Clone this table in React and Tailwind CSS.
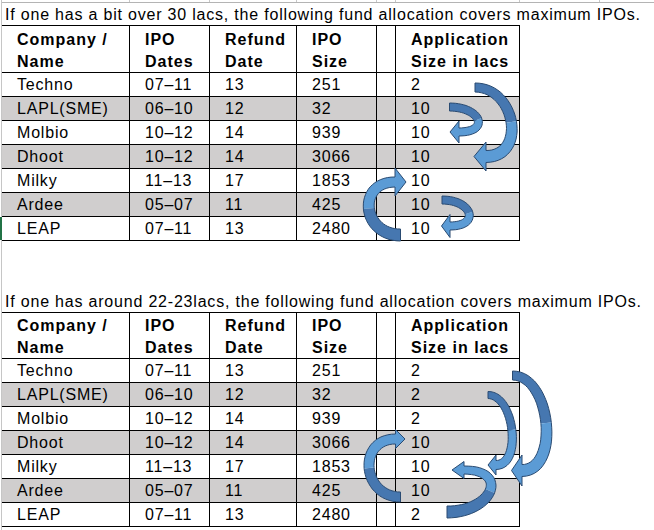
const COLS = "grid grid-cols-[127px_80px_87px_80px_19px_125px]";

const names = ["Techno", "LAPL(SME)", "Molbio", "Dhoot", "Milky", "Ardee", "LEAP"];
const dates = ["07–11", "06–10", "10–12", "10–12", "11–13", "05–07", "07–11"];
const refund = ["13", "12", "14", "14", "17", "11", "13"];
const size = ["251", "32", "939", "3066", "1853", "425", "2480"];

const app1 = ["2", "10", "10", "10", "10", "10", "10"];
const app2 = ["2", "2", "2", "10", "10", "10", "2"];

const header = [
  ["Company /", "Name"],
  ["IPO", "Dates"],
  ["Refund", "Date"],
  ["IPO", "Size"],
  ["", ""],
  ["Application", "Size in lacs"],
];

// curved block arrows: tail -> head along a cubic centerline
const ARROWS = [
  { p0: [475, 87.5], p3: [486, 156.5], s: 1, d: 41, w0: 9, w1: 12, hh: 14.5, hl: 12 },
  { p0: [449.5, 107], p3: [459, 132], s: 1, d: 31.5, w0: 8, w1: 8, hh: 11, hl: 9 },
  { p0: [400.5, 235], p3: [395, 182], s: -1, d: 38.5, w0: 12, w1: 10, hh: 14, hl: 11 },
  { p0: [442, 200], p3: [450, 226], s: 1, d: 30.5, w0: 8, w1: 8, hh: 11.5, hl: 8.5 },
  { p0: [512.5, 375.5], p3: [522, 470.5], s: 1, d: 38.5, w0: 9, w1: 12, hh: 15.5, hl: 10.5 },
  { p0: [488, 395], p3: [496, 465], s: 1, d: 26.5, w0: 7, w1: 9, hh: 10, hl: 8 },
  { p0: [400.5, 497], p3: [395.5, 439], s: -1, d: 38.5, w0: 10, w1: 10, hh: 9.5, hl: 9.5 },
  { p0: [447, 512], p3: [464, 470], s: 1, d: 46, w0: 12, w1: 8, hh: 8.5, hl: 12 },
];

function arrowShapes(a) {
  const [x0, y0] = a.p0;
  const [x3, y3] = a.p3;
  const P = [
    [x0, y0],
    [x0 + a.s * a.d, y0],
    [x3 + a.s * a.d, y3],
    [x3, y3],
  ];
  const pt = (t) => {
    const u = 1 - t;
    const b = [u * u * u, 3 * u * u * t, 3 * u * t * t, t * t * t];
    return [0, 1].map((k) => b.reduce((acc, c, i) => acc + c * P[i][k], 0));
  };
  const tan = (t) => {
    const u = 1 - t;
    const b = [-3 * u * u, 3 * u * u - 6 * u * t, 6 * u * t - 3 * t * t, 3 * t * t];
    const v = [0, 1].map((k) => b.reduce((acc, c, i) => acc + c * P[i][k], 0));
    const len = Math.hypot(v[0], v[1]) || 1;
    return [v[0] / len, v[1] / len];
  };
  const N = 32;
  const left = [];
  const right = [];
  for (let i = 0; i <= N; i++) {
    const t = i / N;
    const [px, py] = pt(t);
    const [tx, ty] = tan(t);
    const w = (a.w0 + (a.w1 - a.w0) * t) / 2;
    left.push([px - ty * w, py + tx * w]);
    right.push([px + ty * w, py - tx * w]);
  }
  const [ex, ey] = pt(1);
  const [tx, ty] = tan(1);
  const head = [
    [ex - ty * a.hh, ey + tx * a.hh],
    [ex + tx * a.hl, ey + ty * a.hl],
    [ex + ty * a.hh, ey - tx * a.hh],
  ];
  const h = N / 2;
  const str = (pts) => "M" + pts.map((p) => p[0].toFixed(1) + " " + p[1].toFixed(1)).join(" L") + " Z";
  return {
    dark: str([...left.slice(0, h + 1), ...right.slice(0, h + 1).reverse()]),
    light: str([...left.slice(h), ...head, ...right.slice(h).reverse()]),
    outline: str([...left, ...head, ...right.slice().reverse()]),
  };
}

function Arrows() {
  return (
    <svg className="absolute left-0 top-0 pointer-events-none" width="654" height="530" viewBox="0 0 654 530">
      {ARROWS.map((a, i) => {
        const s = arrowShapes(a);
        return (
          <g key={i}>
            <path d={s.dark} fill="#4677b0" />
            <path d={s.light} fill="#5b9bd5" />
            <path d={s.outline} fill="none" stroke="#2a4b72" strokeWidth="1" strokeLinejoin="round" />
          </g>
        );
      })}
    </svg>
  );
}

function Cell({ i, gray, children }) {
  return (
    <div
      className={
        "h-[24px] border-t border-black flex items-end pl-[15px] pb-[2px] leading-[18px] whitespace-nowrap " +
        (i > 0 ? "border-l " : "") +
        (i === 5 ? "border-r " : "") +
        (gray ? "bg-[#d0cece]" : "bg-white")
      }
    >
      {children}
    </div>
  );
}

function Table({ apps, headH }) {
  return (
    <div className={COLS + " border-b border-black w-max"}>
      {header.map((h, i) => (
        <div
          key={i}
          className={
            headH +
            " border-t border-black flex flex-col justify-end pl-[15px] pb-[1px] font-bold tracking-[1px] whitespace-nowrap " +
            (i > 0 ? "border-l " : "") +
            (i === 5 ? "border-r" : "")
          }
        >
          <span className="leading-[18px]">{h[0]}</span>
          <span className="leading-[18px] mt-[4px]">{h[1]}</span>
        </div>
      ))}
      {names.map((n, r) => {
        const gray = r % 2 === 1;
        const vals = [n, dates[r], refund[r], size[r], "", apps[r]];
        return vals.map((v, i) => (
          <Cell key={r + "-" + i} i={i} gray={gray}>
            {v}
          </Cell>
        ));
      })}
    </div>
  );
}

export default function App() {
  return (
    <div className="relative w-[654px] h-[530px] bg-white overflow-hidden text-[16px] tracking-[0.8px] text-black font-['Liberation_Sans',Arial,sans-serif]">
      <div className="flex h-full">
        <div className="w-[1px] shrink-0" />
        <div className="w-[1px] shrink-0 bg-[#c6c6c6]" />
        <div className="flex flex-col flex-1">
          {/* column header edge */}
          <div className="h-[3px] flex border-b border-[#b4b4b4]">
            <div className="w-[127px]" />
            <div className="w-[80px] border-l border-[#c8c8c8]" />
            <div className="w-[87px] border-l border-[#c8c8c8]" />
            <div className="w-[80px] border-l border-[#c8c8c8]" />
            <div className="w-[19px] border-l border-[#c8c8c8]" />
            <div className="w-[124px] border-l border-[#c8c8c8]" />
            <div className="w-[80px] border-l border-[#c8c8c8]" />
            <div className="flex-1 border-l border-[#c8c8c8]" />
          </div>
          <div className="h-[22px] flex items-end pl-[3px] pb-[1px] leading-[18px] whitespace-nowrap">
            If one has a bit over 30 lacs, the following fund allocation covers maximum IPOs.
          </div>
          <Table apps={app1} headH="h-[47px]" />
          <div className="h-[47px]" />
          <div className="h-[24px] flex items-end pl-[3px] pb-[1px] leading-[18px] whitespace-nowrap">
            If one has around 22-23lacs, the following fund allocation covers maximum IPOs.
          </div>
          <Table apps={app2} headH="h-[46px]" />
        </div>
      </div>
      <div className="absolute left-0 top-[217px] w-[2px] h-[23px] bg-[#217346]" />
      <Arrows />
    </div>
  );
}
